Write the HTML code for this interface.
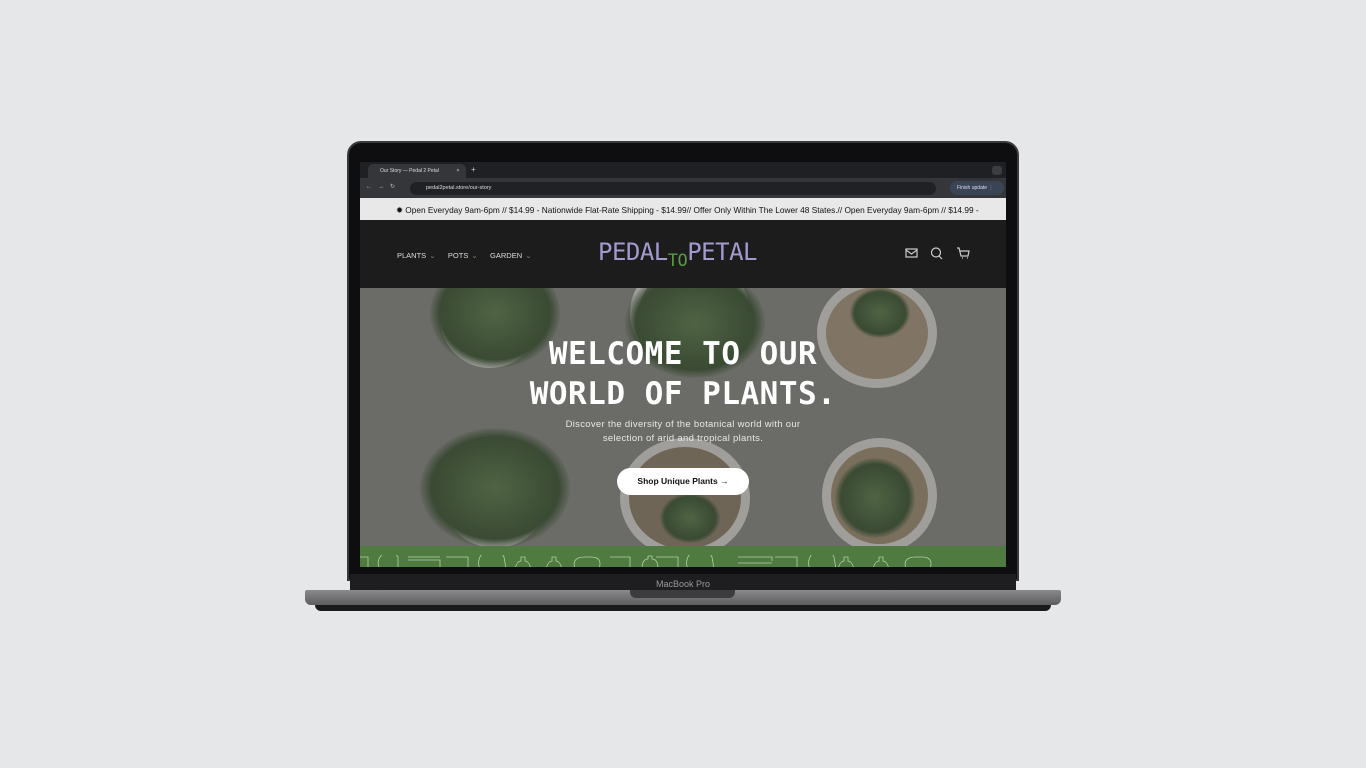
<!DOCTYPE html>
<html><head><style>
*{margin:0;padding:0;box-sizing:border-box}
body{width:1366px;height:768px;background:#e6e7e9;position:relative;overflow:hidden;font-family:"Liberation Sans",sans-serif}
.abs{position:absolute}
.pot{position:absolute;border-radius:50%;background:#cfcdc9;}
.pot i{position:absolute;inset:9px;border-radius:50%;background:#8a7b68;}
.pl{position:absolute;border-radius:50%;background:radial-gradient(#5d7a4c,#3e5535 60%,transparent 72%)}
</style></head><body>
<div class="abs" style="left:347px;top:141px;width:672px;height:440px;background:#0e0e10;border-radius:14px 14px 0 0;border:2px solid #3a3a3c"></div>
<div class="abs" style="left:350px;top:574px;width:666px;height:16px;background:#1e1e20"></div>
<div class="abs" style="left:650px;top:579px;width:66px;text-align:center;color:#9a9a9c;font-size:9px">MacBook Pro</div>
<div class="abs" style="left:305px;top:590px;width:756px;height:15px;background:linear-gradient(#8a8a8c,#5c5c5e);border-radius:2px 2px 6px 6px"></div>
<div class="abs" style="left:630px;top:590px;width:105px;height:8px;background:#3c3c3e;border-radius:0 0 6px 6px"></div>
<div class="abs" style="left:315px;top:605px;width:736px;height:6px;background:#1a1a1a;border-radius:0 0 40px 40px"></div>
<div class="abs" style="left:360px;top:162px;width:646px;height:405px;background:#202124;overflow:hidden">
 <div class="abs" style="left:0;top:0;width:646px;height:16px;background:#1f2023"></div>
 <div class="abs" style="left:8px;top:2px;width:98px;height:14px;background:#35363a;border-radius:5px 5px 0 0;color:#ddd;font-size:5px;padding:4px 0 0 12px">Our Story — Pedal 2 Petal <span style="margin-left:16px">×</span></div>
 <div class="abs" style="left:111px;top:3px;color:#ccc;font-size:8px">+</div>
 <div class="abs" style="left:632px;top:4px;width:10px;height:9px;background:#3c3d41;border-radius:3px"></div>
 <div class="abs" style="left:0;top:16px;width:646px;height:20px;background:#35363a"></div>
 <div class="abs" style="left:6px;top:21px;color:#bbb;font-size:6px;letter-spacing:6px">←→↻</div>
 <div class="abs" style="left:50px;top:20px;width:526px;height:13px;background:#202124;border-radius:7px;color:#ddd;font-size:5.5px;padding:3px 0 0 16px">pedal2petal.store/our-story</div>
 <div class="abs" style="left:590px;top:19px;width:54px;height:14px;background:#394457;border-radius:7px;color:#dde;font-size:5px;padding:4px 0 0 7px">Finish update ⋮</div>
 <div class="abs" style="left:0;top:36px;width:646px;height:22px;background:#e8e8e9;color:#111;font-size:8.3px;white-space:nowrap;padding:7px 0 0 36px">✹ Open Everyday 9am-6pm // $14.99 - Nationwide Flat-Rate Shipping - $14.99// Offer Only Within The Lower 48 States.// Open Everyday 9am-6pm // $14.99 -</div>
 <div class="abs" style="left:0;top:58px;width:646px;height:68px;background:#1d1c1d"></div>
 <div class="abs" style="left:37px;top:89px;color:#ddd;font-size:7.5px;white-space:nowrap;word-spacing:1px">PLANTS <span style="color:#6a9a5a">⌄</span>&nbsp;&nbsp;&nbsp; POTS <span style="color:#6a9a5a">⌄</span>&nbsp;&nbsp;&nbsp; GARDEN <span style="color:#6a9a5a">⌄</span></div>
 <div class="abs" style="left:238px;top:76px;color:#a49ad0;font-size:24px;font-family:'DejaVu Sans Mono',monospace;letter-spacing:-0.5px;white-space:nowrap">PEDAL<span style="color:#5a9a44;font-size:17px;position:relative;top:6px">TO</span>PETAL</div>
 <svg class="abs" style="left:544px;top:84px" width="70" height="14" fill="none" stroke="#ccc" stroke-width="1.2"><rect x="2" y="3" width="11" height="8"/><path d="M2 4l5.5 4 5.5-4"/><circle cx="32" cy="6.5" r="4.5"/><path d="M35 10l3 3"/><path d="M53 2h2l2 8h7l1-5h-9M58 12h1M63 12h1"/></svg>
 <div class="abs" style="left:0;top:126px;width:646px;height:258px;background:#85847f;overflow:hidden">
  <div class="pot" style="left:80px;top:-20px;width:100px;height:100px"><i></i></div>
  <div class="pot" style="left:270px;top:-30px;width:120px;height:110px"><i></i></div>
  <div class="pot" style="left:457px;top:-10px;width:120px;height:110px"><i style="background:#a3937a"></i></div>
  <div class="pot" style="left:80px;top:150px;width:110px;height:110px"><i></i></div>
  <div class="pot" style="left:260px;top:150px;width:130px;height:120px"><i></i></div>
  <div class="pot" style="left:462px;top:150px;width:115px;height:115px"><i style="background:#9a8a70"></i></div>
  <div class="pl" style="left:70px;top:-30px;width:130px;height:110px"></div>
  <div class="pl" style="left:265px;top:-20px;width:140px;height:110px"></div>
  <div class="pl" style="left:490px;top:0px;width:60px;height:50px"></div>
  <div class="pl" style="left:60px;top:140px;width:150px;height:120px"></div>
  <div class="pl" style="left:300px;top:205px;width:60px;height:50px"></div>
  <div class="pl" style="left:475px;top:170px;width:80px;height:80px"></div>
  <div class="abs" style="inset:0;background:rgba(50,50,50,.3)"></div>
  <div class="abs" style="left:133px;top:46px;width:380px;text-align:center;color:#fff;font-family:'DejaVu Sans Mono',monospace;font-weight:bold;font-size:31px;line-height:40px;letter-spacing:0.5px">WELCOME TO OUR<br>WORLD OF PLANTS.</div>
  <div class="abs" style="left:188px;top:130px;width:270px;text-align:center;color:#e8e8e8;font-size:9.5px;line-height:14px;letter-spacing:.3px">Discover the diversity of the botanical world with our selection of arid and tropical plants.</div>
  <div class="abs" style="left:257px;top:180px;width:132px;height:27px;background:#fff;border-radius:14px;color:#111;font-size:8.5px;font-weight:bold;text-align:center;line-height:27px">Shop Unique Plants →</div>
 </div>
 <div class="abs" style="left:0;top:384px;width:646px;height:21px;background:#4f7a40"></div>
 <svg class="abs" style="left:0;top:393px" width="646" height="12" fill="none" stroke="#b5d0a8" stroke-width=".8"><path d="M0 2h8v12M20 14a8 8 0 0 1 18-12v12M48 2h32M48 5h32v12M86 2h22v12M120 14a10 10 0 0 1 24-12l2 12M155 14q2-8 6-8v-4h4v4q4 0 6 8M186 14q2-8 6-8v-4h4v4q4 0 6 8M215 14q-4-12 10-12h6q12 0 8 12M250 2h20v12M282 14q0-10 6-10v-3h4v3q6 0 6 10M296 2h22v12M328 14a10 10 0 0 1 24-12l2 12M378 2h34v4M378 8h34M415 2h22v12M450 14a10 10 0 0 1 24-12l2 12M478 14q2-8 6-8v-4h4v4q4 0 6 8M513 14q2-8 6-8v-4h4v4q4 0 6 8M546 14q-4-12 10-12h6q12 0 8 12"/></svg>
</div>
</body></html>
